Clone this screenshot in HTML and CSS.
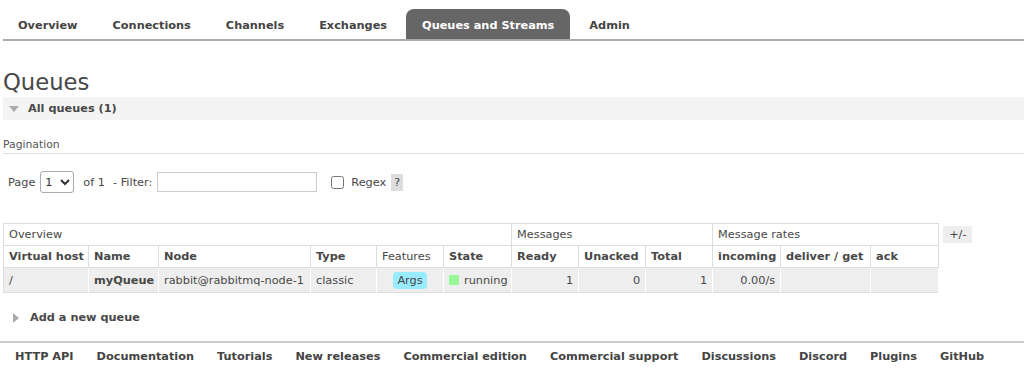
FILE: index.html
```html
<!DOCTYPE html>
<html lang="en">
<head>
  <meta charset="UTF-8" />
  <title>RabbitMQ Management: Queues</title>
  <link rel="stylesheet" href="styles.css">
</head>
<body>
  <ul class="tabs">
    <li><a href="#">Overview</a></li>
    <li><a href="#">Connections</a></li>
    <li><a href="#">Channels</a></li>
    <li><a href="#">Exchanges</a></li>
    <li class="selected"><a href="#">Queues and Streams</a></li>
    <li><a href="#">Admin</a></li>
  </ul>

  <div class="main">
    <h1>Queues</h1>
    <h2 class="section-head open"><span class="arrow down"></span>All queues (1)</h2>

    <div class="pagination-title">Pagination</div>
    <div class="filter-row">
      <label>Page</label>
      <select class="page-select"><option>1</option></select>
      <span>of 1</span>
      <label class="filter-label">- Filter:</label>
      <input type="text" class="filter-input" />
      <input type="checkbox" class="regex-box" />
      <label>Regex</label>
      <span class="help">?</span>
    </div>

    <div class="table-wrap">
      <table class="list">
        <colgroup>
          <col style="width:85px"><col style="width:70px"><col style="width:152px"><col style="width:66px">
          <col style="width:67px"><col style="width:68px"><col style="width:67px"><col style="width:67px">
          <col style="width:67px"><col style="width:68px"><col style="width:90px"><col style="width:68px">
        </colgroup>
        <thead>
          <tr class="group">
            <th colspan="6">Overview</th>
            <th colspan="3">Messages</th>
            <th colspan="3">Message rates</th>
          </tr>
          <tr>
            <th>Virtual host</th>
            <th>Name</th>
            <th>Node</th>
            <th>Type</th>
            <th class="plain">Features</th>
            <th>State</th>
            <th>Ready</th>
            <th>Unacked</th>
            <th>Total</th>
            <th>incoming</th>
            <th>deliver / get</th>
            <th>ack</th>
          </tr>
        </thead>
        <tbody>
          <tr>
            <td>/</td>
            <td class="name">myQueue</td>
            <td>rabbit@rabbitmq-node-1</td>
            <td>classic</td>
            <td class="c"><span class="badge">Args</span></td>
            <td><span class="state-dot"></span>running</td>
            <td class="r">1</td>
            <td class="r">0</td>
            <td class="r">1</td>
            <td class="r">0.00/s</td>
            <td></td>
            <td></td>
          </tr>
        </tbody>
      </table>
      <span class="toggle-cols">+/-</span>
    </div>

    <h2 class="section-head closed"><span class="arrow right"></span>Add a new queue</h2>
  </div>

  <ul class="footer">
    <li><a href="#">HTTP API</a></li>
    <li><a href="#">Documentation</a></li>
    <li><a href="#">Tutorials</a></li>
    <li><a href="#">New releases</a></li>
    <li><a href="#">Commercial edition</a></li>
    <li><a href="#">Commercial support</a></li>
    <li><a href="#">Discussions</a></li>
    <li><a href="#">Discord</a></li>
    <li><a href="#">Plugins</a></li>
    <li><a href="#">GitHub</a></li>
  </ul>
</body>
</html>
```

FILE: styles.css
```css
body {
  margin: 0;
  font-family: "DejaVu Sans", Verdana, sans-serif;
  font-size: 11.3px;
  color: #484848;
  background: #fff;
}

a {
  color: #444;
  text-decoration: none;
}

/* top tabs */
.tabs {
  list-style: none;
  margin: 9px 0 0 3px;
  padding: 0;
  display: flex;
  gap: 3px;
  border-bottom: 2px solid #aaa;
}

.tabs li {
  height: 30px;
  display: flex;
  align-items: center;
  padding: 2px 16px 0;
  box-sizing: border-box;
  border-radius: 8px 8px 0 0;
  white-space: nowrap;
}

.tabs li:first-child {
  padding-left: 15px;
}

.tabs a {
  font-weight: bold;
}

.tabs li.selected {
  background: #666;
}

.tabs li.selected a {
  color: #fff;
}

.main {
  padding-left: 3px;
}

h1 {
  font-size: 22.7px;
  font-weight: normal;
  line-height: 30px;
  margin: 26px 0 0;
  color: #484848;
}

.section-head {
  margin: 0;
  height: 23px;
  display: flex;
  align-items: center;
  font-size: 11.3px;
  font-weight: bold;
  color: #484848;
}

.section-head.open {
  background: #f4f4f4;
}

.section-head.closed {
  margin-top: 13px;
}

.arrow {
  display: inline-block;
  width: 0;
  height: 0;
  margin-right: 9px;
}

.arrow.down {
  margin-left: 6px;
  border-left: 5px solid transparent;
  border-right: 5px solid transparent;
  border-top: 6px solid #aaa;
}

.arrow.right {
  margin-left: 10px;
  margin-right: 11px;
  border-top: 5px solid transparent;
  border-bottom: 5px solid transparent;
  border-left: 6px solid #aaa;
}

.pagination-title {
  margin-top: 17px;
  font-size: 10.8px;
  line-height: 16px;
  color: #555;
  border-bottom: 1px solid #ddd;
}

.filter-row {
  display: flex;
  align-items: center;
  margin: 17px 0 0 5px;
  height: 22px;
  white-space: nowrap;
}

.page-select {
  margin: 0 9px 0 5px;
  height: 22px;
  width: 34px;
  font-family: "DejaVu Sans", sans-serif;
  font-size: 11.3px;
  border: 1px solid #aaa;
  border-radius: 3px;
  background: #fff;
  color: #333;
}

.filter-label {
  margin-left: 8px;
  margin-right: 5px;
}

.filter-input {
  width: 160px;
  height: 20px;
  box-sizing: border-box;
  border: 1px solid #ccc;
  margin: 0;
}

.regex-box {
  margin: 0 7px 0 14px;
  width: 13px;
  height: 13px;
}

.help {
  margin-left: 5px;
  background: #ddd;
  padding: 0 3px;
  height: 17px;
  line-height: 17px;
  font-size: 11px;
}

/* the queue table */
.table-wrap {
  display: flex;
  align-items: flex-start;
  margin-top: 30px;
  gap: 4px;
}

table.list {
  border-collapse: collapse;
  table-layout: fixed;
  width: 935px;
  border: 1px solid #ddd;
}

table.list th {
  text-align: left;
  padding: 0 5px;
  height: 21px;
  border: 1px solid #ddd;
  background: #fff;
  font-weight: bold;
  white-space: nowrap;
  overflow: hidden;
}

table.list tr.group th,
table.list th.plain {
  font-weight: normal;
}

table.list td {
  padding: 0 5px;
  height: 24px;
  background: #eee;
  border-left: 1px solid #fff;
  border-right: 1px solid #fff;
  white-space: nowrap;
  overflow: hidden;
}

table.list td:first-child {
  border-left: none;
}

table.list td.name {
  font-weight: bold;
}

table.list td.r {
  text-align: right;
}

table.list td.c {
  text-align: center;
}

.badge {
  display: inline-block;
  background: #99ebff;
  border-radius: 4px;
  padding: 1px 4px;
  line-height: 15px;
  vertical-align: -2px;
}

.state-dot {
  display: inline-block;
  width: 10px;
  height: 10px;
  background: #98f898;
  margin-right: 5px;
  vertical-align: -1px;
}

.toggle-cols {
  margin-top: 3px;
  background: #eee;
  padding: 0 6px;
  height: 17px;
  line-height: 17px;
}

/* footer links */
.footer {
  list-style: none;
  margin: 12px 0 0;
  padding: 7px 0 0 15px;
  border-top: 2px solid #ccc;
  display: flex;
  gap: 23px;
  white-space: nowrap;
}

.footer a {
  font-weight: bold;
}
```
